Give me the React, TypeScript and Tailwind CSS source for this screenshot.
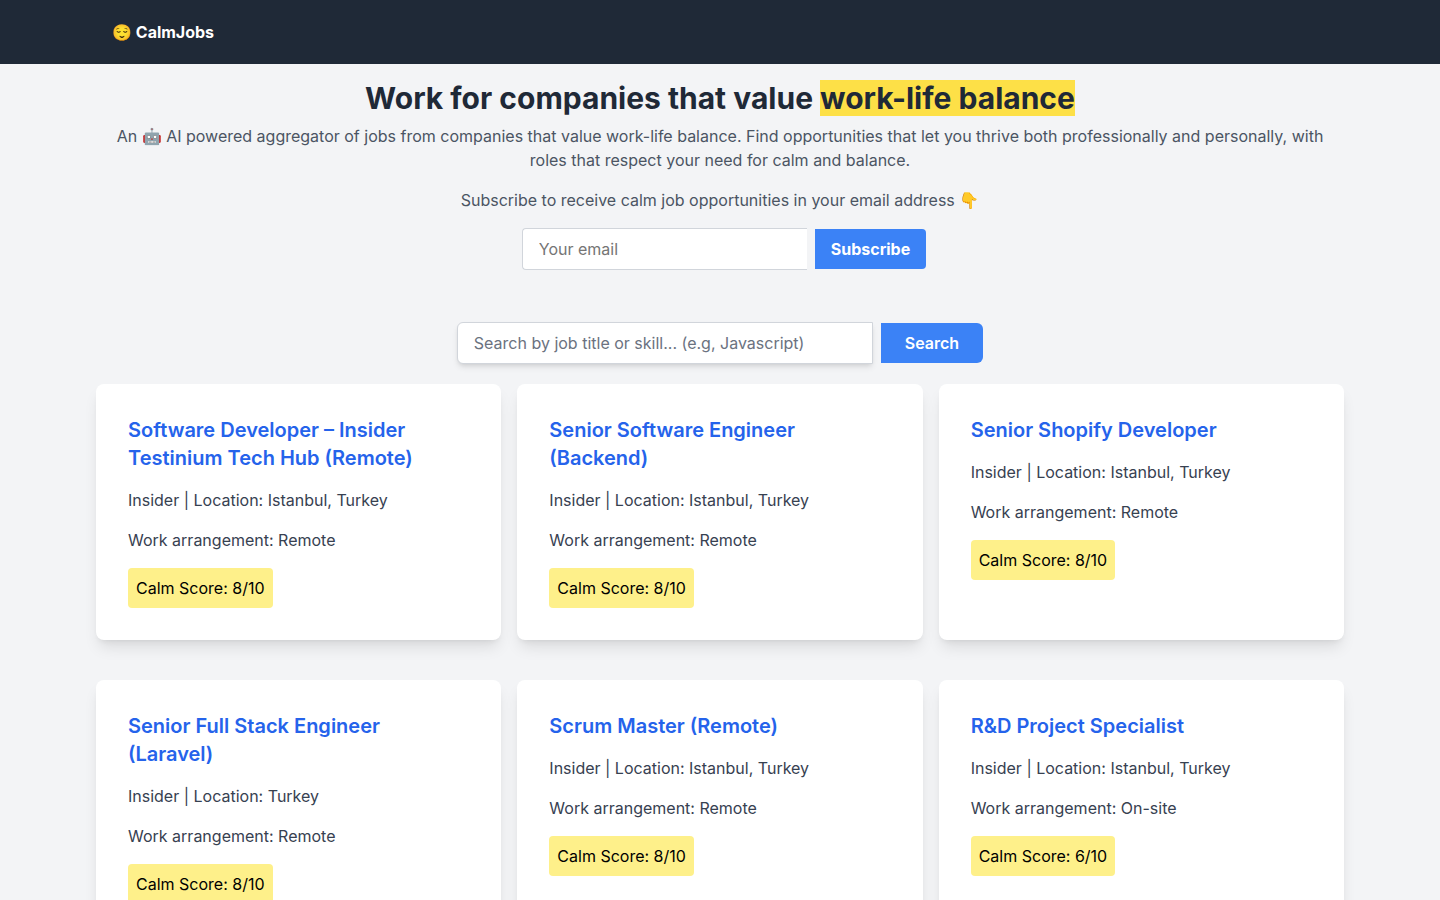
type Job = {
  title: string;
  company: string;
  location: string;
  arrangement: string;
  score: number;
};

const jobs: Job[] = [
  { title: "Software Developer – Insider Testinium Tech Hub (Remote)", company: "Insider", location: "Istanbul, Turkey", arrangement: "Remote", score: 8 },
  { title: "Senior Software Engineer (Backend)", company: "Insider", location: "Istanbul, Turkey", arrangement: "Remote", score: 8 },
  { title: "Senior Shopify Developer", company: "Insider", location: "Istanbul, Turkey", arrangement: "Remote", score: 8 },
  { title: "Senior Full Stack Engineer (Laravel)", company: "Insider", location: "Turkey", arrangement: "Remote", score: 8 },
  { title: "Scrum Master (Remote)", company: "Insider", location: "Istanbul, Turkey", arrangement: "Remote", score: 8 },
  { title: "R&D Project Specialist", company: "Insider", location: "Istanbul, Turkey", arrangement: "On-site", score: 6 },
];

function JobCard({ job }: { job: Job }) {
  return (
    <article className="flex flex-col items-start gap-4 rounded-lg bg-white p-8 shadow-lg">
      <h2 className="text-xl font-semibold text-[#2563eb]">
        <a href="#" className="hover:underline">{job.title}</a>
      </h2>
      <p className="text-[#374151]">
        {job.company} | Location: {job.location}
      </p>
      <p className="text-[#374151]">Work arrangement: {job.arrangement}</p>
      <p className="rounded-sm bg-[#fef08a] p-2 text-black">Calm Score: {job.score}/10</p>
    </article>
  );
}

export default function App() {
  return (
    <div className="min-h-screen bg-[#f3f4f6] font-['Inter',sans-serif] text-base">
      {/* Navbar */}
      <nav className="bg-[#1f2937] p-5">
        <div className="mx-auto max-w-7xl px-8">
          <a href="#" className="block font-bold text-white">😌 CalmJobs</a>
        </div>
      </nav>

      <main className="mx-auto max-w-7xl p-4">
        {/* Intro */}
        <header className="px-4 text-center text-[#4b5563]">
          <h1 className="mb-2 text-3xl font-bold text-[#1f2937]">
            Work for companies that value <span className="bg-[#fde047]">work-life balance</span>
          </h1>
          <p className="mb-4">
            An 🤖 AI powered aggregator of jobs from companies that value work-life balance. Find
            opportunities that let you thrive both professionally and personally, with roles that
            respect your need for calm and balance.
          </p>
          <p>Subscribe to receive calm job opportunities in your email address 👇</p>
        </header>

        {/* Newsletter */}
        <form className="mt-4 flex items-center justify-center gap-2 pl-2" onSubmit={(e) => e.preventDefault()}>
          <input
            type="email"
            aria-label="Your email"
            placeholder="Your email"
            className="w-[285px] rounded-l-sm border border-r-0 border-[#d1d5db] bg-white px-4 py-2 placeholder:text-[#757575]"
          />
          <button type="submit" className="rounded-r-sm bg-[#3b82f6] px-4 py-2 font-bold text-white">
            Subscribe
          </button>
        </form>

        {/* Search */}
        <form className="mt-13 mb-5 flex items-center justify-center gap-2" onSubmit={(e) => e.preventDefault()}>
          <input
            type="text"
            aria-label="Search jobs"
            placeholder="Search by job title or skill... (e.g, Javascript)"
            className="w-104 rounded-l-md border border-[#d1d5db] bg-white px-4 py-2 shadow-md placeholder:text-[#6b7280]"
          />
          <button type="submit" className="rounded-r-md bg-[#3b82f6] px-6 py-2 font-semibold text-white">
            Search
          </button>
        </form>

        {/* Job list */}
        <section className="grid gap-x-4 gap-y-10 md:grid-cols-2 lg:grid-cols-3">
          {jobs.map((job) => (
            <JobCard key={job.title} job={job} />
          ))}
        </section>
      </main>
    </div>
  );
}
